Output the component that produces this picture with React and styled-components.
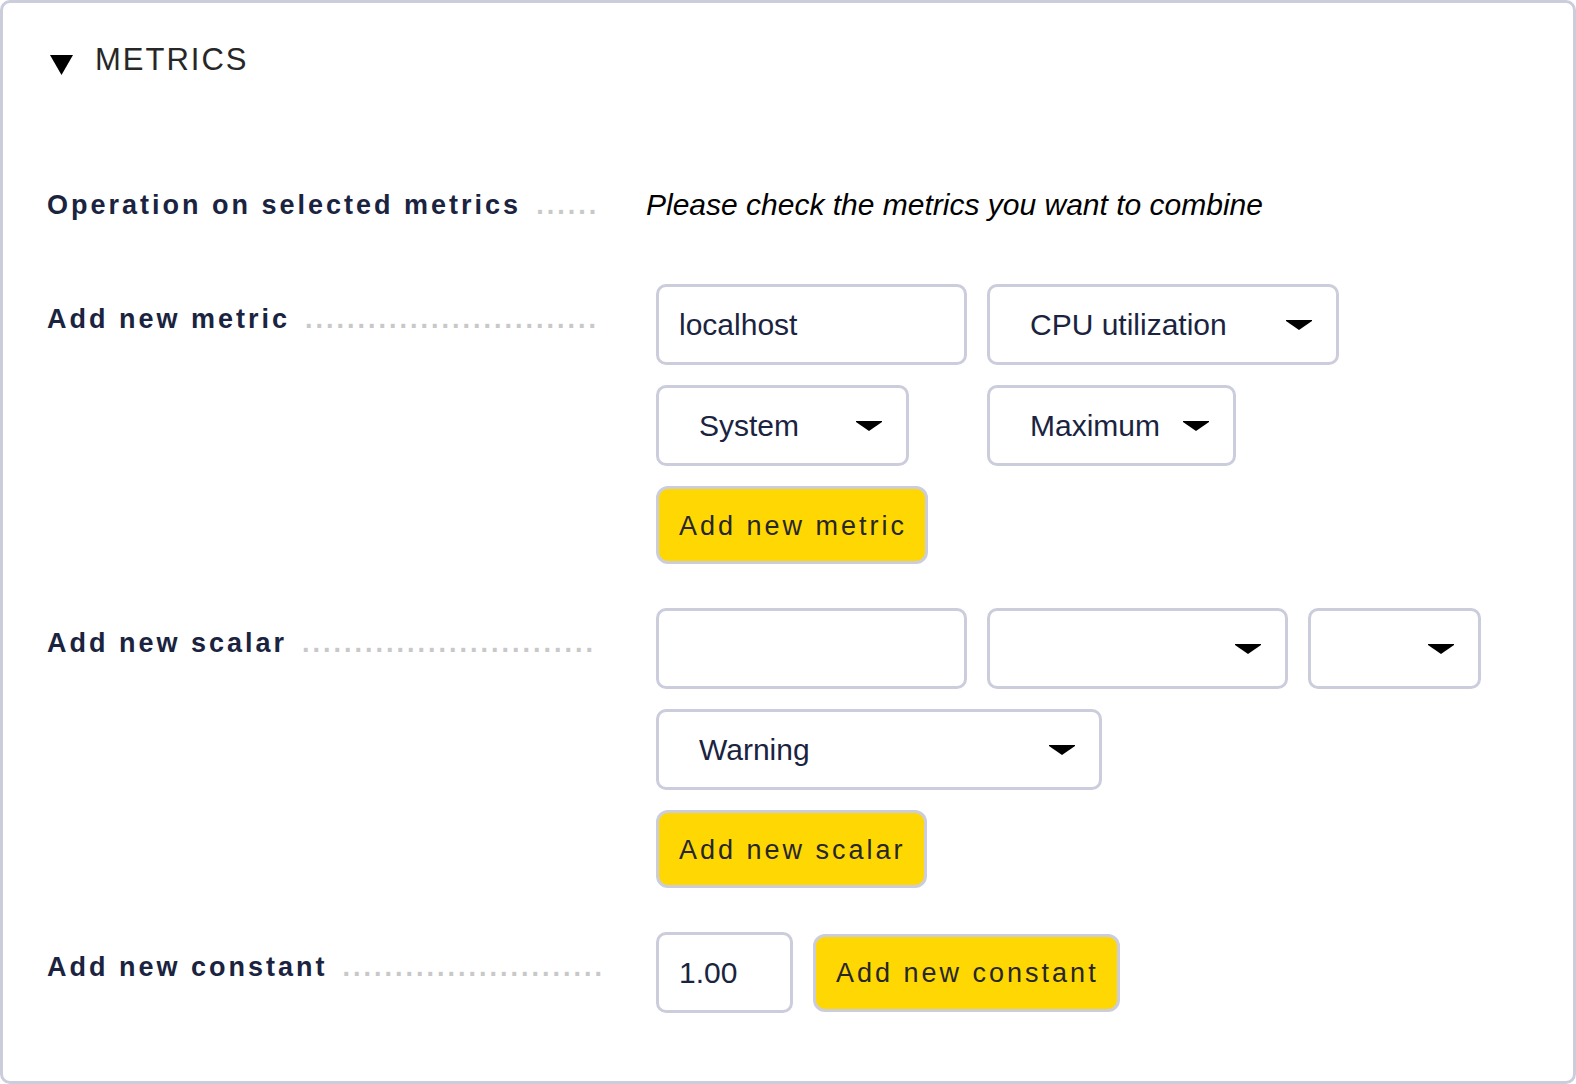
import React, { useState } from "react";
import styled, { createGlobalStyle } from "styled-components";

const color = {
  ink: "#1a2440",
  text: "#272727",
  line: "#cccddc",
  dots: "#c8c8c8",
  accent: "#ffd703",
};

const GlobalStyle = createGlobalStyle`
  *, *::before, *::after { box-sizing: border-box; }
  body {
    margin: 0;
    background: #fff;
    font-family: "Liberation Sans", Arial, sans-serif;
  }
`;

const Panel = styled.section`
  min-height: 100vh;
  padding: 37px 44px 58px;
  border: 3px solid ${color.line};
  border-radius: 10px;
  background: #fff;
`;

const Title = styled.h2`
  margin: 0 0 80px;
  font-size: 31px;
  font-weight: 400;
`;

const Toggle = styled.button`
  display: flex;
  align-items: center;
  gap: 22px;
  height: 40px;
  padding: 0 0 0 3px;
  border: 0;
  background: none;
  color: ${color.text};
  font: inherit;
  line-height: 40px;
  letter-spacing: 2px;
  cursor: pointer;

  svg {
    flex: none;
    margin-top: 10px;
    transform: ${(p) => (p.$open ? "none" : "rotate(-90deg)")};
  }
`;

const Form = styled.form`
  display: flex;
  flex-direction: column;
  gap: 24px;
`;

const Row = styled.div`
  display: grid;
  grid-template-columns: 552px minmax(0, 1fr);
  column-gap: 47px;
`;

const Caption = styled.label`
  display: flex;
  align-items: flex-start;
  gap: 15px;
  padding: 25px 0;
  white-space: nowrap;
  color: ${color.ink};
  font-size: 27px;
  font-weight: 700;
  line-height: 40px;
  letter-spacing: 3px;
`;

const Leader = styled.span`
  color: ${color.dots};
`;

const Hint = styled.em`
  padding: 25px 0;
  color: #000;
  font-size: 30px;
  line-height: 40px;
`;

const Controls = styled.div`
  display: flex;
  flex-direction: column;
  align-items: flex-start;
  gap: 20px;
  padding: 10px;
`;

const Line = styled.div`
  display: flex;
  flex-wrap: wrap;
  align-items: center;
  gap: 20px;
`;

const Pairs = styled.div`
  display: grid;
  grid-template-columns: auto auto;
  gap: 20px;
`;

const TextField = styled.input`
  width: ${(p) => p.$width}px;
  height: 81px;
  padding: 0 20px;
  border: 3px solid ${color.line};
  border-radius: 10px;
  background: #fff;
  color: ${color.ink};
  font: 30px "Liberation Sans", Arial, sans-serif;
`;

const SelectBox = styled.span`
  position: relative;
  display: block;
  width: ${(p) => p.$width}px;

  svg {
    position: absolute;
    top: 36px;
    right: 27px;
    pointer-events: none;
  }
`;

const NativeSelect = styled.select`
  appearance: none;
  display: block;
  width: 100%;
  height: 81px;
  padding: 0 20px 0 40px;
  border: 3px solid ${color.line};
  border-radius: 10px;
  background: #fff;
  color: ${color.ink};
  font: 30px "Liberation Sans", Arial, sans-serif;
`;

const Action = styled.button`
  height: 78px;
  padding: 2px 18px 0 20px;
  border: 3px solid ${color.line};
  border-radius: 12px;
  background: ${color.accent};
  color: ${color.text};
  font: 27px "Liberation Sans", Arial, sans-serif;
  letter-spacing: 3px;
  white-space: nowrap;
  cursor: pointer;
`;

function Select({ width, label, options, id }) {
  return (
    <SelectBox $width={width}>
      <NativeSelect id={id} aria-label={label} defaultValue={options[0]}>
        {options.map((o) => (
          <option key={o}>{o}</option>
        ))}
      </NativeSelect>
      <svg width="26" height="10" viewBox="0 0 26 10" aria-hidden="true">
        <path d="M0 0H26V1L13 10L0 1Z" />
      </svg>
    </SelectBox>
  );
}

function RowCaption({ htmlFor, as, dots, children }) {
  return (
    <Caption as={as} htmlFor={htmlFor}>
      <span>{children}</span>
      <Leader aria-hidden="true">{".".repeat(dots)}</Leader>
    </Caption>
  );
}

export default function App() {
  const [open, setOpen] = useState(true);
  return (
    <>
      <GlobalStyle />
      <Panel>
        <Title>
          <Toggle
            type="button"
            $open={open}
            aria-expanded={open}
            onClick={() => setOpen(!open)}
          >
            <svg width="23" height="20" viewBox="0 0 23 20" aria-hidden="true">
              <path d="M0 0H23L11.5 20Z" />
            </svg>
            METRICS
          </Toggle>
        </Title>
        {open && (
          <Form onSubmit={(e) => e.preventDefault()}>
            <Row>
              <RowCaption as="div" dots={6}>Operation on selected metrics</RowCaption>
              <Hint>Please check the metrics you want to combine</Hint>
            </Row>
            <Row>
              <RowCaption htmlFor="metric-host" dots={28}>Add new metric</RowCaption>
              <Controls>
                <Pairs>
                  <TextField id="metric-host" $width={311} defaultValue="localhost" />
                  <Select width={352} label="Service" options={["CPU utilization"]} />
                  <Select width={253} label="Metric" options={["System"]} />
                  <Select width={249} label="Consolidation" options={["Maximum"]} />
                </Pairs>
                <Action type="button">Add new metric</Action>
              </Controls>
            </Row>
            <Row>
              <RowCaption htmlFor="scalar-host" dots={28}>Add new scalar</RowCaption>
              <Controls>
                <Line>
                  <TextField id="scalar-host" $width={311} />
                  <Select width={301} label="Scalar service" options={[""]} />
                  <Select width={173} label="Scalar metric" options={[""]} />
                </Line>
                <Select width={446} label="Scalar level" options={["Warning"]} />
                <Action type="button">Add new scalar</Action>
              </Controls>
            </Row>
            <Row>
              <RowCaption htmlFor="constant-value" dots={25}>Add new constant</RowCaption>
              <Controls>
                <Line>
                  <TextField id="constant-value" $width={137} defaultValue="1.00" />
                  <Action type="button">Add new constant</Action>
                </Line>
              </Controls>
            </Row>
          </Form>
        )}
      </Panel>
    </>
  );
}
